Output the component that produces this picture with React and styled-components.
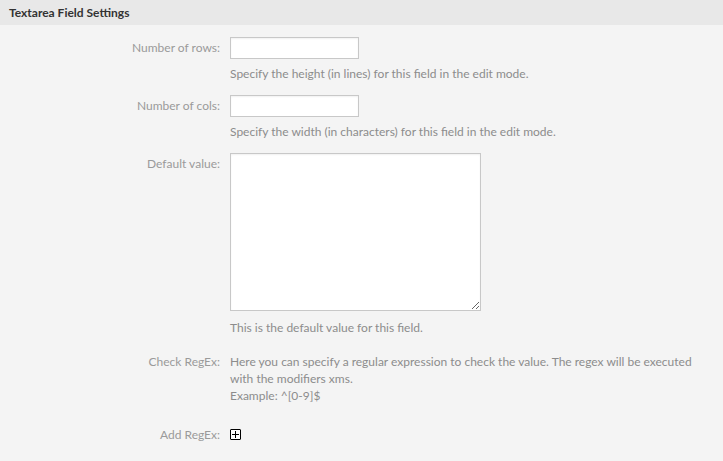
import React from "react";
import styled, { createGlobalStyle } from "styled-components";

const Global = createGlobalStyle`
  html, body { margin: 0; padding: 0; background: #f4f4f4; }
  body { font-family: Lato, "Liberation Sans", sans-serif; font-size: 12px; }
`;

const Panel = styled.section`
  width: 723px;
  min-height: 461px;
  background: #f4f4f4;
`;

const Header = styled.h2`
  margin: 0;
  height: 25px;
  line-height: 25px;
  padding-left: 9px;
  background: #e8e8e8;
  font-size: 12px;
  font-weight: 700;
  color: #333;
`;

const Form = styled.div`
  padding-top: 12px;
`;

const Row = styled.div`
  display: grid;
  grid-template-columns: 220px 1fr;
  column-gap: 10px;
  padding-right: 20px;
  margin-bottom: ${(p) => p.$gap || 0}px;
`;

const Label = styled.label`
  text-align: right;
  color: #9a9a9a;
  line-height: ${(p) => p.$lh || 17}px;
`;

const Value = styled.div`
  display: flex;
  flex-direction: column;
  align-items: flex-start;
`;

const Input = styled.input`
  box-sizing: border-box;
  width: 129px;
  height: 22px;
  border: 1px solid #c8c8c8;
  background: #fff;
  margin: 0;
  padding: 2px 4px;
  box-shadow: inset 0 1px 2px rgba(0, 0, 0, 0.06);
`;

const TextArea = styled.textarea`
  display: block;
  box-sizing: border-box;
  width: 251px;
  height: 158px;
  border: 1px solid #c8c8c8;
  background: #fff;
  margin: 0;
  padding: 4px;
  box-shadow: inset 0 1px 2px rgba(0, 0, 0, 0.06);
`;

const Hint = styled.p`
  margin: ${(p) => p.$top || 0}px 0 0;
  color: #8c8c8c;
  line-height: 17px;
`;

const AddButton = styled.button`
  box-sizing: border-box;
  width: 11px;
  height: 11px;
  padding: 0;
  margin-top: 3px;
  border: 1px solid #000;
  border-radius: 1px;
  background: #fff;
  display: flex;
  align-items: center;
  justify-content: center;
  cursor: pointer;
`;

export default function App() {
  return (
    <>
      <Global />
      <Panel>
        <Header>Textarea Field Settings</Header>
        <Form>
          <Row $gap={12.5}>
            <Label $lh={22}>Number of rows:</Label>
            <Value>
              <Input />
              <Hint $top={6}>Specify the height (in lines) for this field in the edit mode.</Hint>
            </Value>
          </Row>
          <Row $gap={13.5}>
            <Label $lh={22}>Number of cols:</Label>
            <Value>
              <Input />
              <Hint $top={6}>Specify the width (in characters) for this field in the edit mode.</Hint>
            </Value>
          </Row>
          <Row $gap={16.5}>
            <Label $lh={22}>Default value:</Label>
            <Value>
              <TextArea />
              <Hint $top={8}>This is the default value for this field.</Hint>
            </Value>
          </Row>
          <Row $gap={22.5}>
            <Label>Check RegEx:</Label>
            <Value>
              <Hint>
                Here you can specify a regular expression to check the value. The regex will be executed
                with the modifiers xms.
                <br />
                Example: ^[0-9]$
              </Hint>
            </Value>
          </Row>
          <Row>
            <Label>Add RegEx:</Label>
            <Value>
              <AddButton aria-label="Add RegEx">
                <svg width="7" height="7" viewBox="0 0 7 7">
                  <path d="M3.5 0V7M0 3.5H7" stroke="#000" strokeWidth="1" />
                </svg>
              </AddButton>
            </Value>
          </Row>
        </Form>
      </Panel>
    </>
  );
}
